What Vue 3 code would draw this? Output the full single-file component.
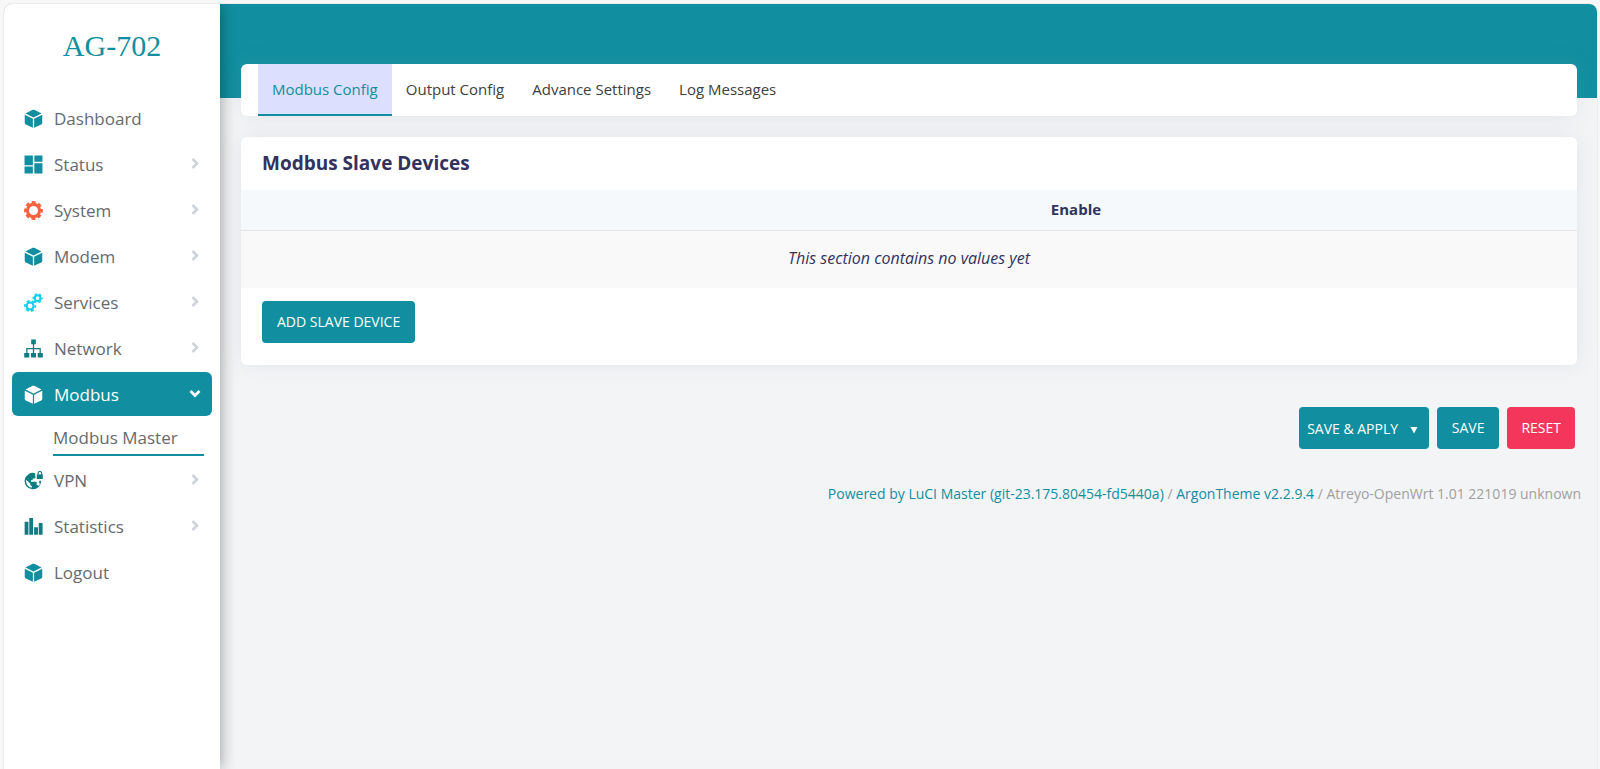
<script setup>
import { ref } from 'vue'

const menu = [
  { name: 'Dashboard', icon: 'cube' },
  { name: 'Status', icon: 'tiles', more: true },
  { name: 'System', icon: 'gear', more: true },
  { name: 'Modem', icon: 'cube', more: true },
  { name: 'Services', icon: 'gears', more: true },
  { name: 'Network', icon: 'sitemap', more: true },
  { name: 'Modbus', icon: 'cube', more: true, children: ['Modbus Master'] },
  { name: 'VPN', icon: 'globe', more: true },
  { name: 'Statistics', icon: 'bars', more: true },
  { name: 'Logout', icon: 'cube' }
]
const opened = ref('Modbus')
const tabs = ['Modbus Config', 'Output Config', 'Advance Settings', 'Log Messages']
const tab = ref(tabs[0])
</script>

<template>
  <div class="shell">
    <aside class="sidebar">
      <a class="brand" href="#">AG-702</a>
      <nav>
        <ul class="menu">
          <li v-for="item in menu" :key="item.name">
            <a href="#" class="item" :class="{ open: opened === item.name }" @click.prevent="opened = item.name">
              <svg class="icon" :class="item.icon" viewBox="0 0 18 18" aria-hidden="true">
                <g v-if="item.icon === 'cube'" fill="currentColor">
                  <path d="M8.2.8Q9 .4 9.8.8L16.6 4.2 9 8 1.4 4.2z" />
                  <path d="M.7 5.4 8.4 9.2V17.8L1.7 14.6Q.7 14.1.7 13z" />
                  <path d="M17.3 5.4 9.6 9.2V17.8L16.3 14.6Q17.3 14.1 17.3 13z" />
                </g>
                <path v-else-if="item.icon === 'tiles'" fill="currentColor" d="M.5.5H8.4V9.6H.5zM9.8.5H17.5V6.4H9.8zM.5 11H8.4V17.5H.5zM9.8 7.8H17.5V17.5H9.8z" />
                <g v-else-if="item.icon === 'gear'" fill="none" stroke="currentColor">
                  <circle cx="9" cy="9" r="5.8" stroke-width="3" />
                  <circle cx="9" cy="9" r="7.8" stroke-width="2.2" stroke-dasharray="3.7 2.426" stroke-dashoffset="1.85" />
                </g>
                <g v-else-if="item.icon === 'gears'" fill="none" stroke="currentColor">
                  <circle cx="5.8" cy="12.3" r="3.3" stroke-width="2" />
                  <circle cx="5.8" cy="12.3" r="4.9" stroke-width="1.6" stroke-dasharray="2.8 2.331" stroke-dashoffset="1.4" />
                  <circle cx="12.9" cy="4.9" r="2.7" stroke-width="1.9" />
                  <circle cx="12.9" cy="4.9" r="4.1" stroke-width="1.4" stroke-dasharray="2.3 1.994" stroke-dashoffset="1.15" />
                </g>
                <g v-else-if="item.icon === 'sitemap'">
                  <path d="M6.8.5h4.4V5H6.8zM.2 13.2H5v4.3H.2zM6.6 13.2h4.8v4.3H6.6zM13 13.2h4.8v4.3H13z" fill="currentColor" />
                  <path d="M9 4.5V13.5M2.7 13.5V9.2H15.3V13.5" fill="none" stroke="currentColor" stroke-width="1.2" />
                </g>
                <g v-else-if="item.icon === 'globe'">
                  <path fill="currentColor" fill-rule="evenodd" d="M10.6 2.1A7.8 7.8 0 1 0 16.2 9.2H14.4V10.6C14.4 11.5 15 11.6 15 12.5L13.9 14.2C13.5 13.4 12.8 13.2 12 13.2V11.3C12 10.7 11.5 10.3 11 10.3H6.5V8.7H8.2V7H9.8C10.6 7 11.1 6.4 11.1 5.4H10.6zM2.2 8.2 6 12V12.8C6 13.6 6.6 14.2 7.4 14.2V15.8A6.2 6.2 0 0 1 2.2 8.2z" />
                  <path fill="currentColor" d="M12.1 3.2H17.8V7.6H12.1z" />
                  <path fill="none" stroke="currentColor" stroke-width="1.1" d="M13.3 3.5V2.2a1.7 1.7 0 0 1 3.4 0V3.5" />
                </g>
                <path v-else fill="currentColor" d="M.6 4.5H4.2V16.8H.6zM5 1H8.6V16.8H5zM9.6 9.8H13.2V16.8H9.6zM14 5.8H17.6V16.8H14z" />
              </svg>
              <span class="label">{{ item.name }}</span>
              <svg v-if="item.more" class="chevron" viewBox="0 0 12 12" aria-hidden="true">
                <path :d="opened === item.name ? 'M1.5 3 6 7.5 10.5 3' : 'M3.5 1 8 5.5 3.5 10'" fill="none" stroke="currentColor" stroke-width="2.7" />
              </svg>
            </a>
            <ul v-if="item.children && opened === item.name" class="submenu">
              <li v-for="child in item.children" :key="child"><a href="#">{{ child }}</a></li>
            </ul>
          </li>
        </ul>
      </nav>
    </aside>

    <div class="page">
      <header class="banner"></header>
      <main class="content">
        <nav class="card tabs">
          <a v-for="name in tabs" :key="name" href="#" :class="{ active: tab === name }" @click.prevent="tab = name">{{ name }}</a>
        </nav>

        <section class="card">
          <h3>Modbus Slave Devices</h3>
          <table>
            <thead>
              <tr><th></th><th scope="col">Enable</th><th></th></tr>
            </thead>
            <tbody>
              <tr><td colspan="3"><em>This section contains no values yet</em></td></tr>
            </tbody>
          </table>
          <div class="create"><button type="button" class="btn">ADD SLAVE DEVICE</button></div>
        </section>

        <div class="actions">
          <button type="button" class="btn split">SAVE &amp; APPLY
            <svg viewBox="0 0 8 8" aria-hidden="true"><path d="M.5 1H7.5L4 7.5z" fill="currentColor" /></svg>
          </button>
          <button type="button" class="btn">SAVE</button>
          <button type="button" class="btn reset">RESET</button>
        </div>
      </main>
      <footer><a href="#">Powered by LuCI Master (git-23.175.80454-fd5440a)</a> / <a href="#">ArgonTheme v2.2.9.4</a> / Atreyo-OpenWrt 1.01 221019 unknown</footer>
    </div>
  </div>
</template>

<style>
body {
  background: #f7f7f8;
}
</style>

<style scoped>
* {
  box-sizing: border-box;
}
.shell {
  display: flex;
  min-height: calc(100vh - 4px);
  margin: 4px 3px 0 4px;
  border-radius: 8px 8px 0 0;
  background: #f3f4f6;
  box-shadow: 0 0 0 1px #ececee;
  font-family: "Open Sans", "Noto Sans", sans-serif;
  color: #32325d;
}
a {
  color: #118fa0;
  text-decoration: none;
}
ul {
  list-style: none;
  margin: 0;
  padding: 0;
}
.sidebar {
  position: relative;
  flex: 0 0 216px;
  padding: 0 8px;
  background: #fff;
  border-radius: 8px 0 0 0;
  box-shadow: 0 0 16px rgba(0, 0, 0, .4);
  clip-path: inset(0 -30px 0 0 round 8px 0 0 0);
}
.brand {
  display: block;
  padding-top: 24px;
  height: 92px;
  font: 30px/36px "Liberation Serif", serif;
  text-align: center;
}
.menu > li {
  margin-bottom: 2px;
}
.item {
  display: flex;
  align-items: center;
  height: 44px;
  padding: 0 11px 0 12px;
  border-radius: 6px;
  color: #666a70;
  font-size: 17px;
}
.icon {
  width: 19px;
  height: 19px;
  margin-right: 11px;
  color: #118fa0;
}
.icon.gear {
  color: #fb6340;
}
.icon.gears {
  color: #11cdef;
}
.icon.sitemap,
.icon.globe,
.icon.bars {
  color: #0d7d82;
}
.label {
  flex: 1;
}
.chevron {
  width: 12px;
  height: 12px;
  color: #ced4da;
}
.item.open {
  background: #118fa0;
}
.item.open,
.item.open .icon,
.item.open .chevron {
  color: #fff;
}
.submenu {
  padding: 4px 8px 0 41px;
}
.submenu a {
  display: block;
  height: 36px;
  border-bottom: 2px solid #118fa0;
  color: #666a70;
  font-size: 17px;
  line-height: 36px;
}
.page {
  flex: 1;
  min-width: 0;
}
.banner {
  height: 94px;
  background: #118fa0;
  border-radius: 0 8px 0 0;
}
.content {
  margin-top: -34px;
  padding: 0 20px 0 21px;
}
.card {
  margin-bottom: 21px;
  background: #fff;
  border-radius: 6px;
  box-shadow: 0 0 20px rgba(136, 152, 170, .15);
}
.tabs {
  display: flex;
  padding: 0 17px;
}
.tabs a {
  height: 52px;
  padding: 0 14px;
  border-bottom: 2px solid transparent;
  color: #404040;
  font-size: 15px;
  line-height: 50px;
}
.tabs a.active {
  border-color: #118fa0;
  background: #dce0fe;
  color: #118fa0;
}
h3 {
  margin: 0;
  padding: 0 21px;
  font-size: 19px;
  font-weight: 700;
  line-height: 53px;
}
table {
  width: 100%;
  border-collapse: collapse;
}
th {
  height: 40px;
  padding: 0 0 2px;
  width: 25%;
  border-bottom: 1px solid #e2e4e6;
  background: #f5f9fc;
  font-size: 15px;
  font-weight: 700;
}
th:first-child {
  width: 50%;
}
td {
  height: 58px;
  padding: 0 0 2px;
  background: #f9f9f9;
  font-size: 16px;
  text-align: center;
}
.create {
  padding: 13px 21px 22px;
}
.btn {
  height: 42px;
  padding: 0 15px 2px;
  border: 0;
  border-radius: 4px;
  background: #118fa0;
  color: #fff;
  font: 14px "Open Sans", "Noto Sans", sans-serif;
}
.create .btn {
  display: block;
}
.split {
  padding: 0 11px 0 8px;
}
.split svg {
  width: 8px;
  height: 8px;
  margin-left: 8px;
}
.reset {
  padding: 0 14px 2px;
  background: #f5365c;
}
.actions {
  display: flex;
  justify-content: flex-end;
  gap: 8px;
  padding: 21px 2px 0 0;
}
footer {
  padding: 34px 16px 20px 0;
  color: #a0a0a0;
  font-size: 14px;
  line-height: 22px;
  text-align: right;
}
</style>
